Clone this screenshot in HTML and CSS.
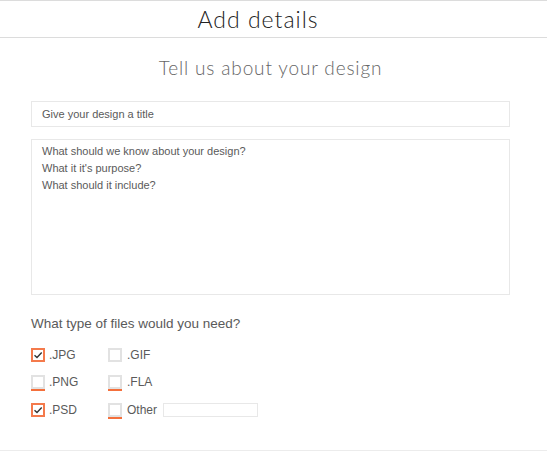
FILE: index.html
```html
<!DOCTYPE html>
<html>
<head>
<meta charset="utf-8">
<link rel="stylesheet" href="styles.css">
</head>
<body>
<div class="page">
  <header class="top">
    <h1 class="title">Add details</h1>
  </header>
  <main class="content">
    <h2 class="subtitle">Tell us about your design</h2>
    <div class="field input-title">Give your design a title</div>
    <div class="field textarea">What should we know about your design?<br>What it it's purpose?<br>What should it include?</div>
    <p class="question">What type of files would you need?</p>
    <div class="options">
      <div class="col">
        <div class="opt"><span class="box checked"><svg viewBox="0 0 10 10" width="10" height="10"><path d="M1.5 5.2 L4 7.5 L8.7 2.6" fill="none" stroke="#333" stroke-width="1.4"/></svg></span><span class="lbl">.JPG</span></div>
        <div class="opt"><span class="box under"></span><span class="lbl">.PNG</span></div>
        <div class="opt"><span class="box checked"><svg viewBox="0 0 10 10" width="10" height="10"><path d="M1.5 5.2 L4 7.5 L8.7 2.6" fill="none" stroke="#333" stroke-width="1.4"/></svg></span><span class="lbl">.PSD</span></div>
      </div>
      <div class="col">
        <div class="opt"><span class="box"></span><span class="lbl">.GIF</span></div>
        <div class="opt"><span class="box under"></span><span class="lbl">.FLA</span></div>
        <div class="opt"><span class="box under"></span><span class="lbl">Other</span><span class="other"></span></div>
      </div>
    </div>
  </main>
</div>
</body>
</html>
```
FILE: styles.css
```css
* { box-sizing: border-box; }
html, body { margin: 0; padding: 0; background: #fff; }
body { font-family: "Liberation Sans", Arial, sans-serif; }
.page { width: 547px; height: 451px; border-top: 1px solid #dcdcdc; border-bottom: 1px solid #ececec; display: flex; flex-direction: column; }
.top { height: 37px; border-bottom: 1px solid #dcdcdc; display: flex; align-items: center; justify-content: center; padding-right: 31px; }
.title { margin: 0; font-family: "Lato", sans-serif; font-weight: 300; font-size: 23px; letter-spacing: 1px; color: #222; line-height: 1; padding-top: 1px; }
.content { padding: 0 37px 0 31px; display: flex; flex-direction: column; }
.subtitle { margin: 20px 0 0; text-align: center; font-family: "Lato", sans-serif; font-weight: 300; font-size: 19px; letter-spacing: 0.85px; color: #666; line-height: 20px; padding-left: 0; }
.field { border: 1px solid #e8e8e8; font-size: 11px; color: #5a5a5a; padding: 0 10px; }
.input-title { margin-top: 23px; height: 26px; line-height: 24px; }
.textarea { margin-top: 12px; height: 156px; padding-top: 3px; line-height: 17px; }
.question { margin: 21px 0 0; font-size: 13.5px; color: #5a5a5a; line-height: 16px; }
.options { display: flex; gap: 0; margin-top: 15px; }
.col { display: flex; flex-direction: column; gap: 12.5px; }
.col:first-child { width: 77px; }
.opt { display: flex; align-items: center; height: 15px; }
.box { width: 14px; height: 14px; border: 2px solid #e2e2e2; display: flex; align-items: center; justify-content: center; position: relative; }
.box.checked { border-color: #f47a4c; }
.box.under::after { content: ""; position: absolute; left: -2px; right: -2px; bottom: -4px; height: 2px; background: #f4703c; }
.lbl { margin-left: 4px; font-size: 12px; color: #5a5a5a; }
.col + .col .lbl { margin-left: 5px; }
.other { margin-left: 6px; width: 95px; height: 14px; border: 1px solid #e8e8e8; }
```
